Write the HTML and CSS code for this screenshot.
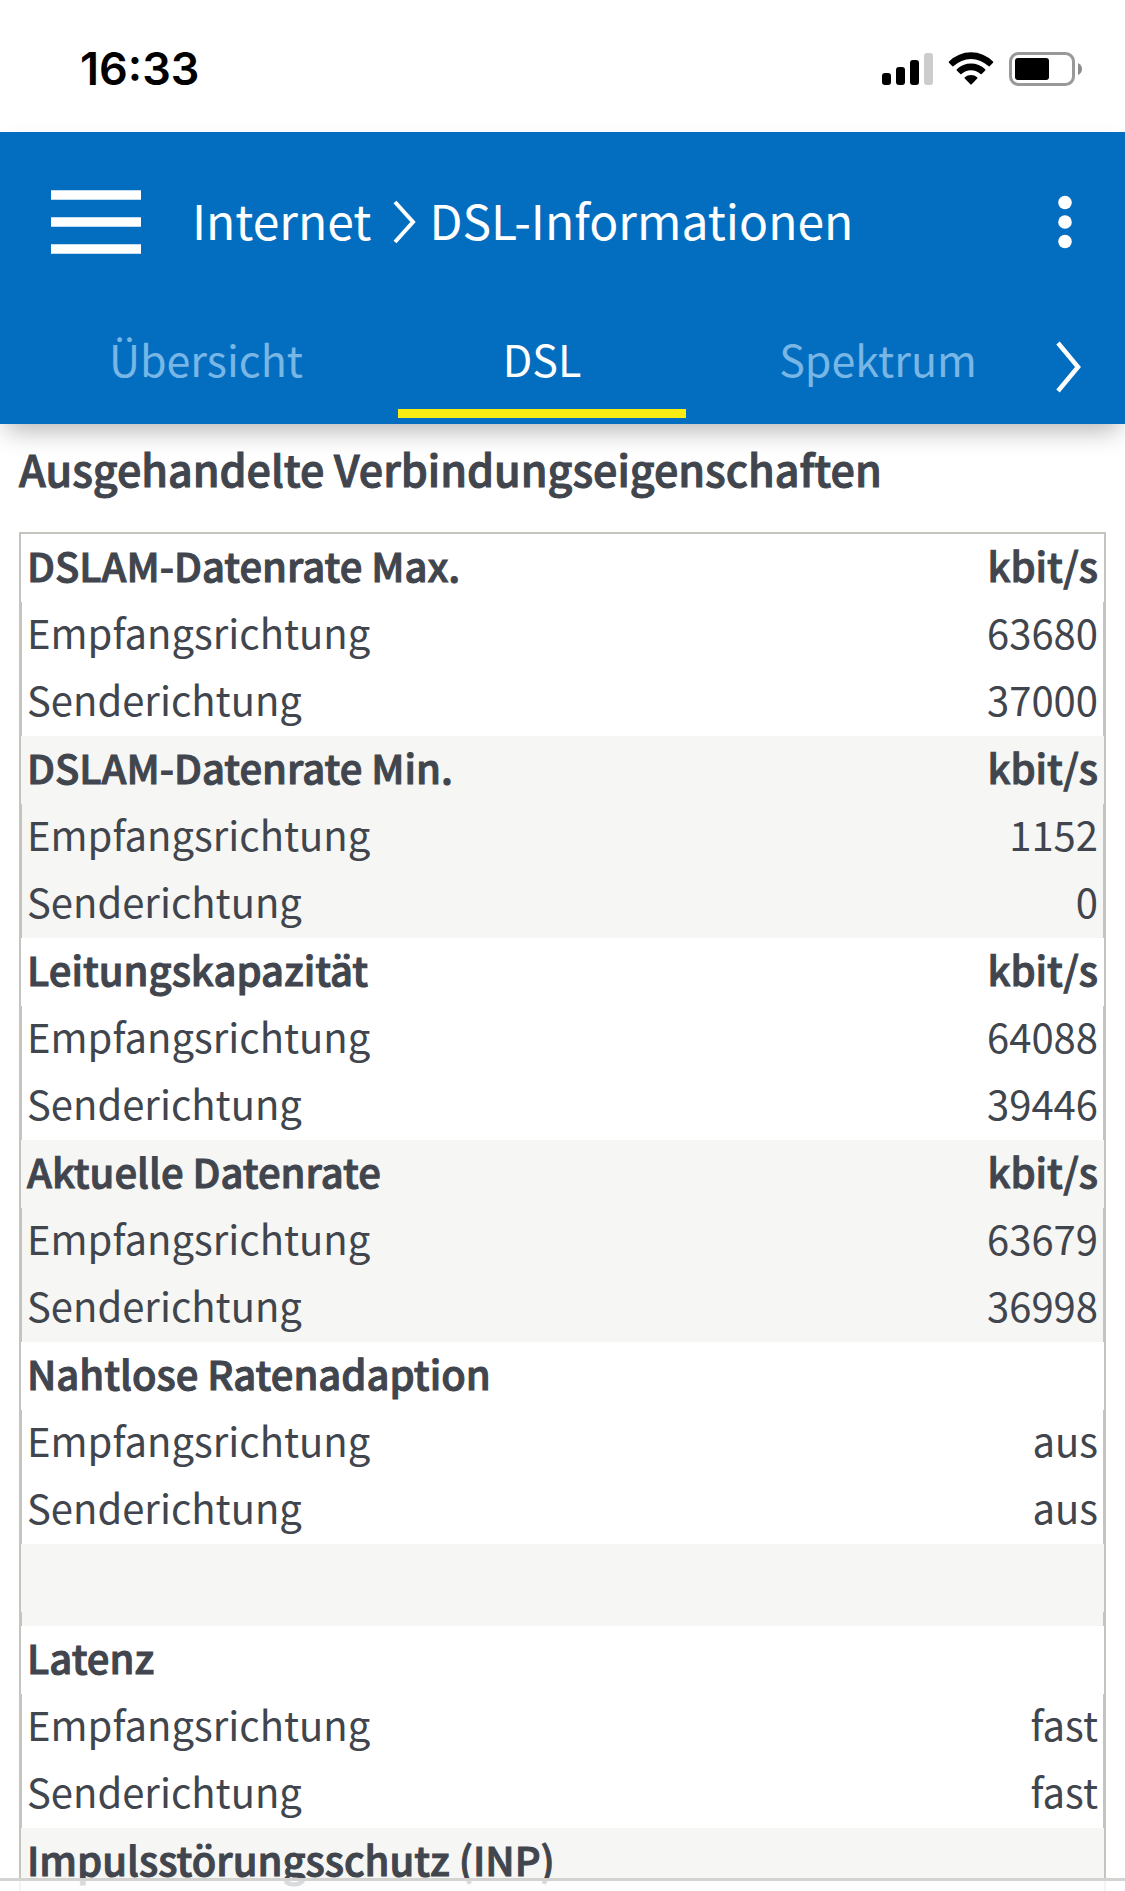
FILE: index.html
```html
<!DOCTYPE html>
<html lang="de">
<head>
    <meta charset="UTF-8">
    <meta name="viewport" content="width=device-width, initial-scale=1.0">
    <title>DSL-Informationen</title>
    <link rel="stylesheet" href="styles.css">
</head>
<body>
    <div class="status-bar">
        <span class="time">16:33</span>
        <div class="status-icons">
            <svg width="51" height="32" viewBox="0 0 51 32">
                <rect x="0" y="20" width="9" height="12" rx="3"/>
                <rect x="14" y="14" width="9" height="18" rx="3"/>
                <rect x="28" y="7" width="9" height="25" rx="3"/>
                <rect x="42" y="0" width="9" height="32" rx="3" fill="#cccccc"/>
            </svg>
            <svg class="wifi" width="46" height="33" viewBox="0 0 46 33">
                <path d="M1 9.5 A31 31 0 0 1 45 9.5 Q45.5 10.2 45 10.8 L41.6 14.2 Q41 14.6 40.4 14.1 A25 25 0 0 0 5.6 14.1 Q5 14.6 4.4 14.2 L1 10.8 Q0.5 10.2 1 9.5 Z"/>
                <path d="M8.8 17.3 A20.5 20.5 0 0 1 37.2 17.3 Q37.7 18 37.2 18.6 L33.7 22.1 Q33.2 22.5 32.6 22 A14 14 0 0 0 13.4 22 Q12.8 22.5 12.3 22.1 L8.8 18.6 Q8.3 18 8.8 17.3 Z"/>
                <path d="M16.8 25.3 A9.5 9.5 0 0 1 29.2 25.3 Q29.8 26 29.2 26.6 L23.7 32.2 Q23 32.8 22.3 32.2 L16.8 26.6 Q16.2 26 16.8 25.3 Z"/>
            </svg>
            <svg width="73" height="34" viewBox="0 0 73 34">
                <rect x="1.5" y="1.5" width="63" height="31" rx="8" fill="none" stroke="#999999" stroke-width="3"/>
                <rect x="6" y="6" width="34" height="22" rx="3"/>
                <path d="M69 11 Q73 13 73 17 Q73 21 69 23 Z" fill="#8c8c8c"/>
            </svg>
        </div>
    </div>

    <header class="header">
        <div class="title-bar">
            <button class="icon-button menu-button" aria-label="Menü">
                <svg width="90" height="64" viewBox="0 0 90 64">
                    <path d="M0 5H90M0 32H90M0 59H90" stroke="#fff" stroke-width="9.4"/>
                </svg>
            </button>
            <nav class="breadcrumb">
                <a href="#">Internet</a>
                <svg width="24" height="44" viewBox="0 0 24 44">
                    <path d="M2 2L20 22L2 42" fill="none" stroke="#fff" stroke-width="4"/>
                </svg>
                <a href="#">DSL-Informationen</a>
            </nav>
            <button class="icon-button more-button" aria-label="Mehr">
                <svg width="14" height="54" viewBox="0 0 14 54">
                    <g fill="#fff">
                        <circle cx="7" cy="7.5" r="6.8"/>
                        <circle cx="7" cy="27" r="6.8"/>
                        <circle cx="7" cy="46.5" r="6.8"/>
                    </g>
                </svg>
            </button>
        </div>
        <nav class="tabs">
            <a class="tab" href="#">Übersicht</a>
            <a class="tab active" href="#">DSL</a>
            <a class="tab" href="#">Spektrum</a>
            <button class="icon-button next-button" aria-label="Weitere Reiter">
                <svg width="26" height="52" viewBox="0 0 26 52">
                    <path d="M2 2L22 26L2 50" fill="none" stroke="#fff" stroke-width="4.5"/>
                </svg>
            </button>
        </nav>
    </header>

    <main class="content">
        <h1>Ausgehandelte Verbindungseigenschaften</h1>
        <table class="values">
            <tbody>
                <tr><th>DSLAM-Datenrate Max.</th><th>kbit/s</th></tr>
                <tr><td>Empfangsrichtung</td><td>63680</td></tr>
                <tr><td>Senderichtung</td><td>37000</td></tr>
            </tbody>
            <tbody>
                <tr><th>DSLAM-Datenrate Min.</th><th>kbit/s</th></tr>
                <tr><td>Empfangsrichtung</td><td>1152</td></tr>
                <tr><td>Senderichtung</td><td>0</td></tr>
            </tbody>
            <tbody>
                <tr><th>Leitungskapazität</th><th>kbit/s</th></tr>
                <tr><td>Empfangsrichtung</td><td>64088</td></tr>
                <tr><td>Senderichtung</td><td>39446</td></tr>
            </tbody>
            <tbody>
                <tr><th>Aktuelle Datenrate</th><th>kbit/s</th></tr>
                <tr><td>Empfangsrichtung</td><td>63679</td></tr>
                <tr><td>Senderichtung</td><td>36998</td></tr>
            </tbody>
            <tbody>
                <tr><th>Nahtlose Ratenadaption</th><th></th></tr>
                <tr><td>Empfangsrichtung</td><td>aus</td></tr>
                <tr><td>Senderichtung</td><td>aus</td></tr>
            </tbody>
            <tbody class="spacer">
                <tr><th></th><th></th></tr>
                <tr><td></td><td></td></tr>
            </tbody>
            <tbody>
                <tr><th>Latenz</th><th></th></tr>
                <tr><td>Empfangsrichtung</td><td>fast</td></tr>
                <tr><td>Senderichtung</td><td>fast</td></tr>
            </tbody>
            <tbody>
                <tr><th>Impulsstörungsschutz (INP)</th><th></th></tr>
            </tbody>
        </table>
    </main>

    <div class="bottom-bar"></div>
</body>
</html>
```
FILE: styles.css
```css
* {
    margin: 0;
    padding: 0;
    box-sizing: border-box;
}

body {
    display: flex;
    flex-direction: column;
    height: 100vh;
    overflow: hidden;
    background: #fff;
    color: #41454d;
    font-family: 'Noto Sans CJK SC', 'Noto Sans', sans-serif;
    font-size: 40px;
}

a {
    color: inherit;
    text-decoration: none;
}

svg {
    display: block;
}

.status-bar {
    display: flex;
    flex-shrink: 0;
    justify-content: space-between;
    align-items: center;
    height: 132px;
    padding: 5px 43px 0 80px;
    color: #000;
}

.time {
    font-family: Inter, sans-serif;
    font-size: 45px;
    font-weight: 600;
}

.status-icons {
    display: flex;
    align-items: center;
    gap: 15px;
}

.header {
    position: relative;
    flex-shrink: 0;
    background: #036ec0;
    color: #fff;
    box-shadow: 0 12px 24px -6px rgba(0, 0, 0, 0.3);
}

.title-bar {
    display: flex;
    align-items: center;
    height: 180px;
    padding: 0 53px 0 51px;
}

.icon-button {
    border: none;
    background: none;
    cursor: pointer;
}

.breadcrumb {
    display: flex;
    flex: 1;
    align-items: center;
    gap: 12px;
    padding-left: 51px;
    font-size: 48px;
    line-height: 60px;
}

.breadcrumb a {
    padding-bottom: 6px;
}

.breadcrumb svg {
    margin-left: 10px;
}

.tabs {
    display: flex;
    gap: 48px;
    height: 112px;
    padding: 0 43px 6px 62px;
}

.tab {
    flex: 1;
    border-bottom: 9px solid transparent;
    color: #78b6e5;
    font-size: 43px;
    line-height: 92px;
    text-align: center;
}

.tab.active {
    border-color: #f9ec13;
    color: #fff;
}

.next-button {
    display: flex;
    align-items: center;
    width: 26px;
    margin-left: -14px;
    padding-top: 3px;
}

.content {
    padding: 14px 19px 0;
}

/* medium plus a thin stroke gives a semibold */
h1,
.values th {
    font-weight: 500;
    -webkit-text-stroke: 1px #41454d;
}

h1 {
    margin-bottom: 34px;
    font-size: 43px;
    line-height: 60px;
}

.values {
    width: 100%;
    border-top: 2px solid #c5c5bf;
    border-spacing: 0;
}

.values tbody:nth-child(even) {
    background: #f6f6f4;
}

.values th,
.values td {
    height: 67px;
    line-height: 60px;
    text-align: left;
    vertical-align: top;
}

.values th {
    height: 68px;
    line-height: 62px;
}

.values th:first-child {
    padding-left: 6px;
    border-left: 2px solid #c5c5bf;
}

.values td:first-child {
    padding-left: 5px;
    border-left: 3px solid #c5c5bf;
}

.values th:last-child,
.values td:last-child {
    padding-right: 6px;
    border-right: 2px solid #c5c5bf;
    text-align: right;
}

.values td:last-child {
    padding-right: 5px;
    border-right-width: 3px;
}

.values .spacer td {
    height: 14px;
}

/* browser toolbar edge over the page */
.bottom-bar {
    position: fixed;
    right: 0;
    bottom: 0;
    left: 0;
    height: 13px;
    border-top: 3px solid #d3d3d1;
    background: rgba(255, 255, 255, 0.8);
}
```
